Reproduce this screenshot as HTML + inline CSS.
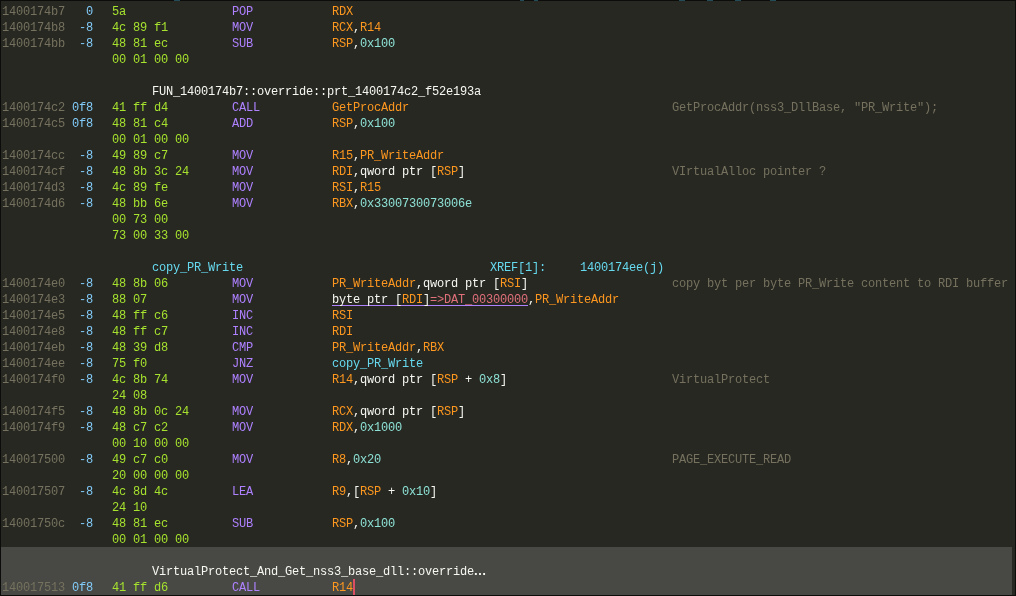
<!DOCTYPE html>
<html><head><meta charset="utf-8"><title>Listing</title>
<style>
html,body{margin:0;padding:0;background:#272822;overflow:hidden}
#w{position:relative;width:1016px;height:596px;background:#272822;overflow:hidden;
font-family:"Liberation Mono","Liberation Mono","DejaVu Sans Mono",monospace;font-size:12px;letter-spacing:-0.2px;line-height:16px;color:#f8f8f2;white-space:pre}
#top{position:absolute;left:0;top:0;width:1016px;height:1px;background:#0c0c0a}
#lft{position:absolute;left:0;top:0;width:1px;height:596px;background:#0c0c0a}
#rgt{position:absolute;left:1015px;top:0;width:1px;height:596px;background:#0c0c0a}
#bot{position:absolute;left:0;top:595px;width:1016px;height:1px;background:#0c0c0a}
#hl{position:absolute;left:1px;top:547px;width:1011px;height:48px;background:#484944}
#cur{position:absolute;left:353px;top:579px;width:2px;height:16px;background:#dc4f62}
.row{position:absolute;left:0;width:1016px;height:16px;will-change:transform}
.row span{position:absolute;top:0;height:16px}
i{font-style:normal}
.a{left:2px;color:#75715e}
.s{right:923px;color:#82cbf8;text-align:right}
.b{left:112px;color:#a6e22e}
.m{left:232px;color:#ae81ff}
.o{left:332px;color:#f8f8f2}
.c{left:672px;color:#75715e}
.lb{left:152px}
.x1{left:490px;color:#66d9ef}
.x2{left:580px;color:#66d9ef}
.e{font-family:"Liberation Sans",sans-serif;font-size:13px;letter-spacing:0;font-weight:bold;line-height:0;margin-left:-0.6px}
.r{color:#fd971f}.n{color:#8de0d4}.l{color:#66d9ef}.d{color:#e0707a}.w{color:#f8f8f2}
u{text-decoration:none;border-bottom:1px solid #ae81ff;display:inline-block;height:13px;line-height:16px}
.tk{position:absolute;top:0;height:1px;background:#234b58}
</style></head><body><div id="w">
<div id="hl"></div><div id="top"></div>
<div class="row" style="top:4px"><span class="a">1400174b7</span><span class="s">0</span><span class="b">5a</span><span class="m">POP</span><span class="o"><i class="r">RDX</i></span></div>
<div class="row" style="top:20px"><span class="a">1400174b8</span><span class="s">-8</span><span class="b">4c 89 f1</span><span class="m">MOV</span><span class="o"><i class="r">RCX</i>,<i class="r">R14</i></span></div>
<div class="row" style="top:36px"><span class="a">1400174bb</span><span class="s">-8</span><span class="b">48 81 ec</span><span class="m">SUB</span><span class="o"><i class="r">RSP</i>,<i class="n">0x100</i></span></div>
<div class="row" style="top:52px"><span class="b">00 01 00 00</span></div>
<div class="row" style="top:84px"><span class="lb w">FUN_1400174b7::override::prt_1400174c2_f52e193a</span></div>
<div class="row" style="top:100px"><span class="a">1400174c2</span><span class="s">0f8</span><span class="b">41 ff d4</span><span class="m">CALL</span><span class="o"><i class="r">GetProcAddr</i></span><span class="c">GetProcAddr(nss3_DllBase, "PR_Write");</span></div>
<div class="row" style="top:116px"><span class="a">1400174c5</span><span class="s">0f8</span><span class="b">48 81 c4</span><span class="m">ADD</span><span class="o"><i class="r">RSP</i>,<i class="n">0x100</i></span></div>
<div class="row" style="top:132px"><span class="b">00 01 00 00</span></div>
<div class="row" style="top:148px"><span class="a">1400174cc</span><span class="s">-8</span><span class="b">49 89 c7</span><span class="m">MOV</span><span class="o"><i class="r">R15</i>,<i class="r">PR_WriteAddr</i></span></div>
<div class="row" style="top:164px"><span class="a">1400174cf</span><span class="s">-8</span><span class="b">48 8b 3c 24</span><span class="m">MOV</span><span class="o"><i class="r">RDI</i>,qword ptr [<i class="r">RSP</i>]</span><span class="c">VIrtualAlloc pointer ?</span></div>
<div class="row" style="top:180px"><span class="a">1400174d3</span><span class="s">-8</span><span class="b">4c 89 fe</span><span class="m">MOV</span><span class="o"><i class="r">RSI</i>,<i class="r">R15</i></span></div>
<div class="row" style="top:196px"><span class="a">1400174d6</span><span class="s">-8</span><span class="b">48 bb 6e</span><span class="m">MOV</span><span class="o"><i class="r">RBX</i>,<i class="n">0x3300730073006e</i></span></div>
<div class="row" style="top:212px"><span class="b">00 73 00</span></div>
<div class="row" style="top:228px"><span class="b">73 00 33 00</span></div>
<div class="row" style="top:260px"><span class="lb l">copy_PR_Write</span><span class="x1">XREF[1]:</span><span class="x2">1400174ee(j)</span></div>
<div class="row" style="top:276px"><span class="a">1400174e0</span><span class="s">-8</span><span class="b">48 8b 06</span><span class="m">MOV</span><span class="o"><i class="r">PR_WriteAddr</i>,qword ptr [<i class="r">RSI</i>]</span><span class="c">copy byt per byte PR_Write content to RDI buffer</span></div>
<div class="row" style="top:292px"><span class="a">1400174e3</span><span class="s">-8</span><span class="b">88 07</span><span class="m">MOV</span><span class="o"><u>byte ptr [<i class="r">RDI</i>]<i class="d">=&gt;DAT_00300000</i></u>,<i class="r">PR_WriteAddr</i></span></div>
<div class="row" style="top:308px"><span class="a">1400174e5</span><span class="s">-8</span><span class="b">48 ff c6</span><span class="m">INC</span><span class="o"><i class="r">RSI</i></span></div>
<div class="row" style="top:324px"><span class="a">1400174e8</span><span class="s">-8</span><span class="b">48 ff c7</span><span class="m">INC</span><span class="o"><i class="r">RDI</i></span></div>
<div class="row" style="top:340px"><span class="a">1400174eb</span><span class="s">-8</span><span class="b">48 39 d8</span><span class="m">CMP</span><span class="o"><i class="r">PR_WriteAddr</i>,<i class="r">RBX</i></span></div>
<div class="row" style="top:356px"><span class="a">1400174ee</span><span class="s">-8</span><span class="b">75 f0</span><span class="m">JNZ</span><span class="o"><i class="l">copy_PR_Write</i></span></div>
<div class="row" style="top:372px"><span class="a">1400174f0</span><span class="s">-8</span><span class="b">4c 8b 74</span><span class="m">MOV</span><span class="o"><i class="r">R14</i>,qword ptr [<i class="r">RSP</i> + <i class="n">0x8</i>]</span><span class="c">VirtualProtect</span></div>
<div class="row" style="top:388px"><span class="b">24 08</span></div>
<div class="row" style="top:404px"><span class="a">1400174f5</span><span class="s">-8</span><span class="b">48 8b 0c 24</span><span class="m">MOV</span><span class="o"><i class="r">RCX</i>,qword ptr [<i class="r">RSP</i>]</span></div>
<div class="row" style="top:420px"><span class="a">1400174f9</span><span class="s">-8</span><span class="b">48 c7 c2</span><span class="m">MOV</span><span class="o"><i class="r">RDX</i>,<i class="n">0x1000</i></span></div>
<div class="row" style="top:436px"><span class="b">00 10 00 00</span></div>
<div class="row" style="top:452px"><span class="a">140017500</span><span class="s">-8</span><span class="b">49 c7 c0</span><span class="m">MOV</span><span class="o"><i class="r">R8</i>,<i class="n">0x20</i></span><span class="c">PAGE_EXECUTE_READ</span></div>
<div class="row" style="top:468px"><span class="b">20 00 00 00</span></div>
<div class="row" style="top:484px"><span class="a">140017507</span><span class="s">-8</span><span class="b">4c 8d 4c</span><span class="m">LEA</span><span class="o"><i class="r">R9</i>,[<i class="r">RSP</i> + <i class="n">0x10</i>]</span></div>
<div class="row" style="top:500px"><span class="b">24 10</span></div>
<div class="row" style="top:516px"><span class="a">14001750c</span><span class="s">-8</span><span class="b">48 81 ec</span><span class="m">SUB</span><span class="o"><i class="r">RSP</i>,<i class="n">0x100</i></span></div>
<div class="row" style="top:532px"><span class="b">00 01 00 00</span></div>
<div class="row" style="top:564px"><span class="lb w">VirtualProtect_And_Get_nss3_base_dll::override<i class="e">…</i></span></div>
<div class="row" style="top:580px"><span class="a">140017513</span><span class="s">0f8</span><span class="b">41 ff d6</span><span class="m">CALL</span><span class="o"><i class="r">R14</i></span></div>
<div class="tk" style="left:174px;width:6px"></div><div class="tk" style="left:520px;width:4px"></div><div class="tk" style="left:534px;width:4px"></div><div class="tk" style="left:679px;width:6px"></div><div class="tk" style="left:707px;width:6px"></div><div class="tk" style="left:735px;width:6px"></div><div class="tk" style="left:770px;width:6px"></div><div id="cur"></div><div id="lft"></div><div id="rgt"></div><div id="bot"></div>
</div></body></html>
